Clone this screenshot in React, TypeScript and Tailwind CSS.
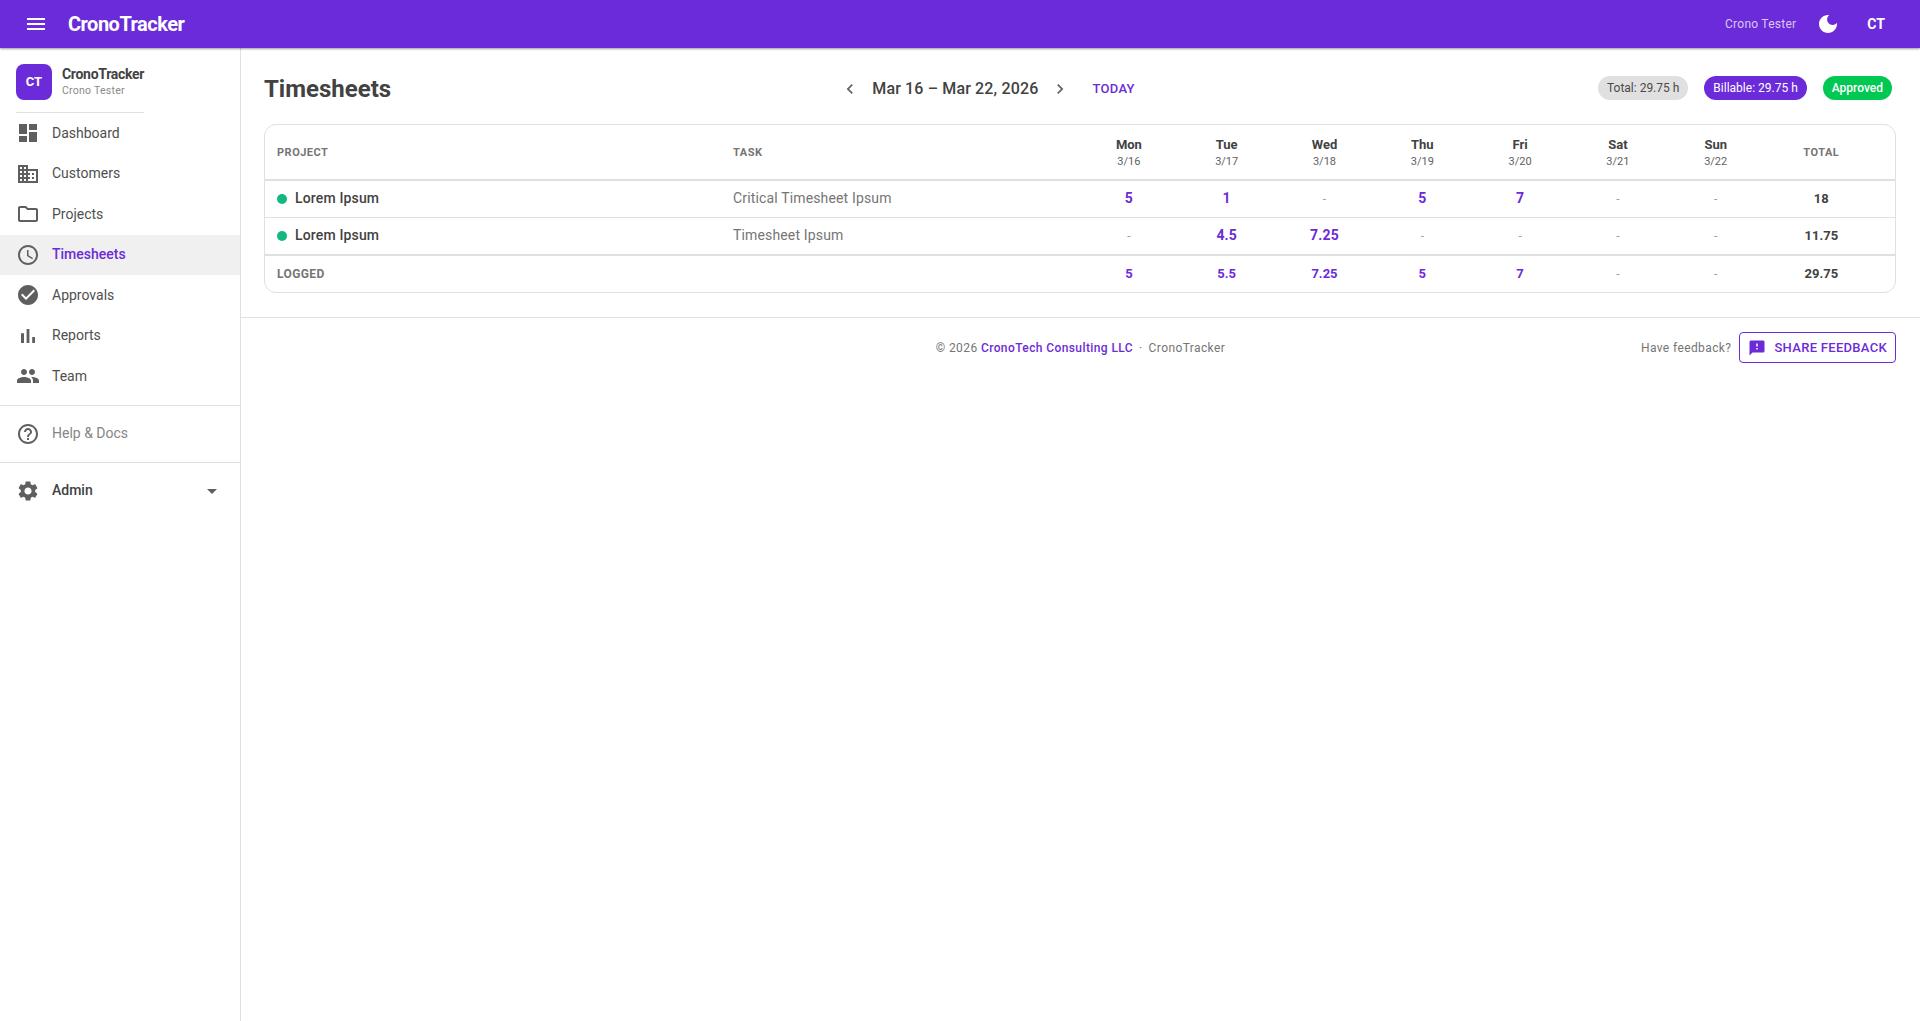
import React from "react";

const P = {
  menu: "M3 18h18v-2H3v2zm0-5h18v-2H3v2zm0-7v2h18V6H3z",
  moon: "M12 3c-4.97 0-9 4.03-9 9s4.03 9 9 9 9-4.03 9-9c0-.46-.04-.92-.1-1.36-.98 1.37-2.58 2.26-4.4 2.26-2.98 0-5.4-2.42-5.4-5.4 0-1.81.89-3.42 2.26-4.4-.44-.06-.9-.1-1.36-.1z",
  dashboard: "M3 13h8V3H3v10zm0 8h8v-6H3v6zm10 0h8V11h-8v10zm0-18v6h8V3h-8z",
  business: "M12 7V3H2v18h20V7H12zM6 19H4v-2h2v2zm0-4H4v-2h2v2zm0-4H4V9h2v2zm0-4H4V5h2v2zm4 12H8v-2h2v2zm0-4H8v-2h2v2zm0-4H8V9h2v2zm0-4H8V5h2v2zm10 12h-8v-2h2v-2h-2v-2h2v-2h-2V9h8v10zm-2-8h-2v2h2v-2zm0 4h-2v2h2v-2z",
  folder: "M9.17 6l2 2H20v10H4V6h5.17M10 4H4c-1.1 0-1.99.9-1.99 2L2 18c0 1.1.9 2 2 2h16c1.1 0 2-.9 2-2V8c0-1.1-.9-2-2-2h-8l-2-2z",
  clock: "M11.99 2C6.47 2 2 6.48 2 12s4.47 10 9.99 10C17.52 22 22 17.52 22 12S17.52 2 11.99 2zM12 20c-4.42 0-8-3.58-8-8s3.58-8 8-8 8 3.58 8 8-3.58 8-8 8zm.5-13H11v6l5.25 3.15.75-1.23-4.5-2.67z",
  check: "M12 2C6.48 2 2 6.48 2 12s4.48 10 10 10 10-4.48 10-10S17.52 2 12 2zm-2 15l-5-5 1.41-1.41L10 14.17l7.59-7.59L19 8l-9 9z",
  bars: "M5 9.2h3V19H5zM10.6 5h2.8v14h-2.8zm5.6 8H19v6h-2.8z",
  people: "M16 11c1.66 0 2.99-1.34 2.99-3S17.66 5 16 5c-1.66 0-3 1.34-3 3s1.34 3 3 3zm-8 0c1.66 0 2.99-1.34 2.99-3S9.66 5 8 5C6.34 5 5 6.34 5 8s1.34 3 3 3zm0 2c-2.33 0-7 1.17-7 3.5V19h14v-2.5c0-2.33-4.67-3.5-7-3.5zm8 0c-.29 0-.62.02-.97.05 1.16.84 1.97 1.97 1.97 3.45V19h6v-2.5c0-2.33-4.67-3.5-7-3.5z",
  help: "M11 18h2v-2h-2v2zm1-16C6.48 2 2 6.48 2 12s4.48 10 10 10 10-4.48 10-10S17.52 2 12 2zm0 18c-4.41 0-8-3.59-8-8s3.59-8 8-8 8 3.59 8 8-3.59 8-8 8zm0-14c-2.21 0-4 1.79-4 4h2c0-1.1.9-2 2-2s2 .9 2 2c0 2-3 1.75-3 5h2c0-2.25 3-2.5 3-5 0-2.21-1.79-4-4-4z",
  gear: "M19.14 12.94c.04-.3.06-.61.06-.94 0-.32-.02-.64-.07-.94l2.03-1.58c.18-.14.23-.41.12-.61l-1.92-3.32c-.12-.22-.37-.29-.59-.22l-2.39.96c-.5-.38-1.03-.7-1.62-.94l-.36-2.54c-.04-.24-.24-.41-.48-.41h-3.84c-.24 0-.43.17-.47.41l-.36 2.54c-.59.24-1.13.57-1.62.94l-2.39-.96c-.22-.08-.47 0-.59.22L2.74 8.87c-.12.21-.08.47.12.61l2.03 1.58c-.05.3-.09.63-.09.94s.02.64.07.94l-2.03 1.58c-.18.14-.23.41-.12.61l1.92 3.32c.12.22.37.29.59.22l2.39-.96c.5.38 1.03.7 1.62.94l.36 2.54c.05.24.24.41.48.41h3.84c.24 0 .44-.17.47-.41l.36-2.54c.59-.24 1.13-.56 1.62-.94l2.39.96c.22.08.47 0 .59-.22l1.92-3.32c.12-.22.07-.47-.12-.61l-2.01-1.58zM12 15.6c-1.98 0-3.6-1.62-3.6-3.6s1.62-3.6 3.6-3.6 3.6 1.62 3.6 3.6-1.62 3.6-3.6 3.6z",
  drop: "M7 10l5 5 5-5z",
  feedback: "M20 2H4c-1.1 0-1.99.9-1.99 2L2 22l4-4h14c1.1 0 2-.9 2-2V4c0-1.1-.9-2-2-2zm-7 12h-2v-2h2v2zm0-4h-2V6h2v4z",
  left: "M15.41 7.41L14 6l-6 6 6 6 1.41-1.41L10.83 12z",
  right: "M10 6L8.59 7.41 13.17 12l-4.58 4.59L10 18l6-6z",
};

function Icon({ d, className }: { d: string; className: string }) {
  return (
    <svg viewBox="0 0 24 24" fill="currentColor" className={className}>
      <path d={d} />
    </svg>
  );
}

const NAV = [
  { label: "Dashboard", icon: P.dashboard },
  { label: "Customers", icon: P.business },
  { label: "Projects", icon: P.folder },
  { label: "Timesheets", icon: P.clock, active: true },
  { label: "Approvals", icon: P.check },
  { label: "Reports", icon: P.bars },
  { label: "Team", icon: P.people },
];

const DAYS = [
  ["Mon", "3/16"],
  ["Tue", "3/17"],
  ["Wed", "3/18"],
  ["Thu", "3/19"],
  ["Fri", "3/20"],
  ["Sat", "3/21"],
  ["Sun", "3/22"],
];

const ROWS = [
  { project: "Lorem Ipsum", task: "Critical Timesheet Ipsum", hours: ["5", "1", "-", "5", "7", "-", "-"], total: "18", border: "border-b border-[#e0e0e0]" },
  { project: "Lorem Ipsum", task: "Timesheet Ipsum", hours: ["-", "4.5", "7.25", "-", "-", "-", "-"], total: "11.75", border: "border-b-2 border-[#e0e0e0]" },
];
const LOGGED = ["5", "5.5", "7.25", "5", "7", "-", "-"];

export default function App() {
  return (
    <div className="min-h-screen flex flex-col bg-white text-[#424242] font-['Roboto',sans-serif]">
      <header className="h-12 shrink-0 z-10 flex items-center justify-between bg-[#6c2bd9] text-white shadow-[0_1px_2px_rgba(0,0,0,0.4)] pl-6 pr-[35px]">
        <div className="flex items-center gap-5">
          <Icon d={P.menu} className="w-6 h-6" />
          <span className="text-[20px] font-bold tracking-[-0.5px]">CronoTracker</span>
        </div>
        <div className="flex items-center">
          <span className="text-[12px] tracking-[0.25px] text-[#d9c8f7]">Crono Tester</span>
          <Icon d={P.moon} className="w-6 h-6 ml-5" />
          <span className="text-[14px] font-bold ml-[27px]">CT</span>
        </div>
      </header>

      <div className="flex flex-1">
        <aside className="w-[241px] shrink-0 border-r border-[#e0e0e0] bg-white">
          <div className="px-4 pt-4">
            <div className="flex items-center gap-2.5 w-32 h-9 border-b border-[#e0e0e0] pb-3 box-content">
              <div className="w-9 h-9 rounded-lg bg-[#6c2bd9] text-white flex items-center justify-center text-[13px] font-bold shrink-0">CT</div>
              <div className="flex flex-col">
                <span className="text-[14px] font-bold leading-[18px] tracking-[-0.3px] whitespace-nowrap">CronoTracker</span>
                <span className="text-[10.5px] leading-[16px] tracking-[0.25px] text-[#8a8a8a] whitespace-nowrap">Crono Tester</span>
              </div>
            </div>
          </div>
          <nav className="pb-2">
            {NAV.map((n) => (
              <div key={n.label} className={`h-[40.5px] flex items-center pl-4 gap-3 ${n.active ? "bg-[#f0f0f0]" : ""}`}>
                <Icon d={n.icon} className="w-6 h-6 text-[#5f5f5f]" />
                <span className={`text-[14px] ${n.active ? "text-[#6c2bd9] font-medium" : "text-[#4f4f4f]"}`}>{n.label}</span>
              </div>
            ))}
          </nav>
          <div className="border-t border-[#e0e0e0] py-2">
            <div className="h-10 flex items-center pl-4 gap-3">
              <Icon d={P.help} className="w-6 h-6 text-[#5f5f5f]" />
              <span className="text-[14px] text-[#858585]">Help &amp; Docs</span>
            </div>
          </div>
          <div className="border-t border-[#e0e0e0] py-2">
            <div className="h-10 flex items-center pl-4 gap-3 pr-4">
              <Icon d={P.gear} className="w-6 h-6 text-[#5f5f5f]" />
              <span className="text-[14px] font-medium flex-1">Admin</span>
              <Icon d={P.drop} className="w-6 h-6 text-[#5f5f5f]" />
            </div>
          </div>
        </aside>

        <main className="flex-1 min-w-0">
          <div className="pl-[23px] pr-6 pt-6 pb-6 border-b border-[#e0e0e0]">
            <div className="flex items-center justify-between h-8">
              <h1 className="text-[24px] font-bold leading-8 pt-[2px] text-[#424242]">Timesheets</h1>
              <div className="flex items-center mr-[12px] pt-[1px]">
                <Icon d={P.left} className="w-5 h-5 text-[#616161] mx-1.5" />
                <span className="text-[16px] font-medium tracking-[0.15px] mx-[6px] text-[#424242]">Mar 16 – Mar 22, 2026</span>
                <Icon d={P.right} className="w-5 h-5 text-[#616161] mx-1.5" />
                <span className="text-[13px] font-medium tracking-[0.3px] text-[#6c2bd9] ml-4 mr-2">TODAY</span>
              </div>
              <div className="flex items-center gap-4 pr-1">
                <span className="h-6 px-[9px] rounded-full bg-[#e0e0e0] text-[12px] text-[#4a4a4a] flex items-center">Total: 29.75 h</span>
                <span className="h-6 px-[9px] rounded-full bg-[#6c2bd9] text-[12px] text-white flex items-center">Billable: 29.75 h</span>
                <span className="h-6 px-[9px] rounded-full bg-[#00c853] text-[12px] font-medium text-white flex items-center">Approved</span>
              </div>
            </div>
            <div className="mt-5 border border-[#e0e0e0] rounded-xl overflow-hidden">
              <table className="w-full table-fixed border-collapse">
                <colgroup>
                  <col className="w-[456px]" />
                  <col className="w-[359px]" />
                  {DAYS.map((d) => (
                    <col key={d[0]} className="w-[97.8px]" />
                  ))}
                  <col />
                </colgroup>
                <thead>
                  <tr className="h-[55px] border-b-2 border-[#e0e0e0]">
                    <th className="pl-3 pt-[2px] text-left text-[11px] font-bold tracking-[0.5px] text-[#757575]">PROJECT</th>
                    <th className="pl-3 pt-[2px] text-left text-[11px] font-bold tracking-[0.5px] text-[#757575]">TASK</th>
                    {DAYS.map((d) => (
                      <th key={d[0]} className="text-center font-normal">
                        <div className="text-[13px] font-bold leading-[18px] text-[#424242]">{d[0]}</div>
                        <div className="text-[11px] leading-[15px] text-[#616161]">{d[1]}</div>
                      </th>
                    ))}
                    <th className="pr-[17px] pt-[2px] text-center text-[11px] font-bold tracking-[0.5px] text-[#757575]">TOTAL</th>
                  </tr>
                </thead>
                <tbody>
                  {ROWS.map((r, i) => (
                    <tr key={i} className={`${i === 0 ? "h-[37px]" : "h-[38px]"} ${r.border}`}>
                      <td className="pl-3">
                        <div className="flex items-center gap-2">
                          <span className="w-2.5 h-2.5 rounded-full bg-[#10b981]" />
                          <span className="text-[14px] font-medium tracking-[0.15px] text-[#424242]">{r.project}</span>
                        </div>
                      </td>
                      <td className="pl-3 text-[14px] tracking-[0.15px] text-[#757575]">{r.task}</td>
                      {r.hours.map((h, j) => (
                        <td key={j} className={h === "-" ? "text-center text-[12px] text-[#9e9e9e]" : "text-center text-[14px] font-bold tracking-[0.15px] text-[#6c2bd9]"}>{h}</td>
                      ))}
                      <td className="pr-[17px] text-center text-[13px] font-bold text-[#424242]">{r.total}</td>
                    </tr>
                  ))}
                  <tr className="h-[37px]">
                    <td className="pl-3 text-[12px] font-bold tracking-[0.4px] text-[#757575]">LOGGED</td>
                    <td />
                    {LOGGED.map((h, j) => (
                      <td key={j} className={h === "-" ? "text-center text-[12px] text-[#9e9e9e]" : "text-center text-[13px] font-bold text-[#6c2bd9]"}>{h}</td>
                    ))}
                    <td className="pr-[17px] text-center text-[13px] font-bold text-[#424242]">29.75</td>
                  </tr>
                </tbody>
              </table>
            </div>
          </div>
          <footer className="grid grid-cols-[1fr_auto_1fr] items-center pt-[14px] text-[12px] tracking-[0.4px] text-[#757575]">
            <div />
            <div className="flex items-center whitespace-nowrap">
              <span>© 2026&nbsp;</span>
              <span className="font-medium text-[#6c2bd9]">CronoTech Consulting LLC</span>
              <span className="mx-[6px]">·</span>
              <span>CronoTracker</span>
            </div>
            <div className="flex items-center justify-end gap-2 pr-6">
              <span>Have feedback?</span>
              <span className="h-[31px] px-2 rounded border border-[#6c2bd9] text-[#6c2bd9] flex items-center gap-2 text-[13px] font-medium tracking-[0.3px]">
                <Icon d={P.feedback} className="w-[18px] h-[18px]" />
                SHARE FEEDBACK
              </span>
            </div>
          </footer>
        </main>
      </div>
    </div>
  );
}
